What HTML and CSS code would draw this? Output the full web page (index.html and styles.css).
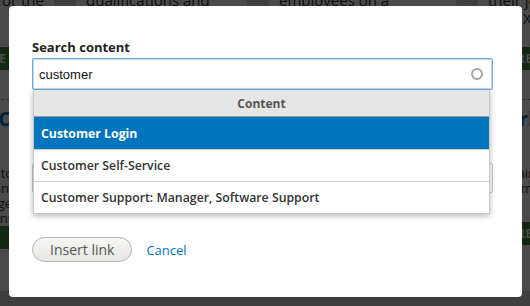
FILE: index.html
```html
<!DOCTYPE html>
<html>
<head>
<meta charset="utf-8">
<link rel="stylesheet" href="styles.css">
</head>
<body>
<div class="page">
  <div class="col">
    <p class="cut">work for the</p>
    <span class="btn-green">READ MORE</span>
    <h3 class="title">Customer Care</h3>
    <p class="para">Help customers<br>find answers<br>and manage their<br>accounts to s</p>
    <span class="btn-green btn-low">APPLY</span>
  </div>
  <div class="col">
    <p class="cut">qualifications and</p>
  </div>
  <div class="col">
    <p class="cut">employees on a</p>
  </div>
  <div class="col">
    <p class="cut">their job</p>
    <span class="close">X</span>
    <span class="btn-green btn-r">MORE</span>
    <h3 class="title">Marketing</h3>
    <p class="para">Reaching<br>customers</p>
    <span class="btn-green btn-low">MORE</span>
  </div>
</div>
<div class="overlay"></div>
<div class="dialog">
  <div class="field">
    <label class="label">Search content</label>
    <div class="search">
      <div class="input">customer<span class="spinner"></span></div>
      <ul class="menu">
        <li class="menu-head">Content</li>
        <li class="menu-item is-active">Customer Login</li>
        <li class="menu-item">Customer Self-Service</li>
        <li class="menu-item">Customer Support: Manager, Software Support</li>
      </ul>
    </div>
  </div>
  <div class="field field-2">
    <div class="box"></div>
  </div>
  <div class="actions">
    <button class="button">Insert link</button>
    <a class="link">Cancel</a>
  </div>
</div>
</body>
</html>
```
FILE: styles.css
```css
html, body {
  margin: 0;
  padding: 0;
}
body {
  width: 530px;
  height: 306px;
  overflow: hidden;
  background: #d4d4d4;
  font-family: "Open Sans", "DejaVu Sans", sans-serif;
}
.page {
  display: grid;
  grid-template-columns: 189px 173px 189px 189px;
  column-gap: 20px;
  margin-left: -134px;
  margin-top: -9px;
  height: 300px;
}
.col {
  background: #fff;
  border-left: 1px dotted #bbb;
  border-right: 1px dotted #bbb;
  padding: 0 10px;
  display: flex;
  flex-direction: column;
  align-items: flex-end;
  color: #333;
  overflow: hidden;
}
.col:nth-child(2), .col:nth-child(3), .col:nth-child(4) {
  align-items: flex-start;
}
.cut {
  margin: 0;
  font-size: 15px;
  line-height: 18px;
  align-self: flex-start;
  white-space: nowrap;
}
.col:first-child .cut {
  align-self: flex-end;
}
.btn-green {
  margin-top: 38px;
  height: 23px;
  width: 120px;
  background: #3c8a3c;
  color: #fff;
  font-size: 13px;
  line-height: 23px;
  font-weight: 700;
  padding-left: 6px;
  box-sizing: border-box;
}
.btn-r {
  margin-top: 20px;
}
.close {
  font-size: 15px;
  line-height: 18px;
  margin-left: 35px;
}
.title {
  margin: 29px 0 0;
  padding-top: 8px;
  border-top: 1px dashed #999;
  align-self: stretch;
  font-size: 20px;
  line-height: 22px;
  color: #0074bd;
  font-weight: 700;
  white-space: nowrap;
}
.col:first-child .title {
  text-align: right;
}
.para {
  margin: 36px 0 0;
  font-size: 13px;
  line-height: 15px;
  align-self: stretch;
  white-space: nowrap;
}
.col:first-child .para {
  text-align: right;
}
.btn-low {
  margin-top: auto;
  margin-bottom: 46px;
}
.overlay {
  position: fixed;
  inset: 0;
  background: rgba(0, 0, 0, 0.71);
}
.dialog {
  position: fixed;
  left: 9px;
  top: 6px;
  width: 513px;
  height: 291px;
  box-sizing: border-box;
  padding: 32px 29px 0 23px;
  background: #fff;
  border-radius: 4px;
}
.label {
  display: block;
  font-size: 13px;
  line-height: 18px;
  font-weight: 700;
  color: #222;
  margin-bottom: 2px;
}
.search {
  position: relative;
}
.input {
  height: 32px;
  box-sizing: border-box;
  border: 1px solid #6fa8e0;
  box-shadow: inset 0 0 0 1px #c3dbf3;
  border-radius: 2px;
  padding: 0 6px;
  display: flex;
  align-items: center;
  font-family: "Liberation Sans", Arial, sans-serif;
  font-size: 13px;
  color: #111;
}
.spinner {
  margin-left: auto;
  margin-right: 3px;
  width: 8px;
  height: 8px;
  border: 2px solid #a3a3a3;
  border-radius: 50%;
}
.menu {
  position: absolute;
  z-index: 2;
  top: 32px;
  left: 1px;
  width: 457px;
  margin: 0;
  padding: 0;
  list-style: none;
  background: #fff;
  border: 1px solid #c8c8c8;
  border-top: 0;
  box-sizing: border-box;
  box-shadow: 0 2px 6px rgba(0, 0, 0, 0.28);
}
.menu-head {
  height: 26px;
  background: #e6e6e6;
  border-bottom: 1px solid #9d9d9d;
  font-size: 12px;
  font-weight: 700;
  color: #555;
  display: flex;
  align-items: center;
  justify-content: center;
}
.menu-item {
  height: 32px;
  display: flex;
  align-items: center;
  padding: 0 7px;
  font-size: 12.3px;
  font-weight: 600;
  color: #333;
}
.menu-item + .menu-item {
  height: 31px;
  border-top: 1px solid #cfcfcf;
}
.menu-item.is-active {
  background: #0074bd;
  color: #fff;
  font-weight: 700;
}
.field-2 {
  margin-top: 73px;
}
.box {
  height: 30px;
  border: 1px solid #c8c8c8;
  box-sizing: border-box;
  border-radius: 2px;
}
.actions {
  margin-top: 44px;
  display: flex;
  align-items: center;
}
.button {
  height: 25px;
  padding: 0 17px;
  border: 1px solid #b3b3b3;
  border-radius: 20px;
  background: linear-gradient(#f6f6f4, #e5e5e2);
  font-family: "Open Sans", sans-serif;
  font-size: 14px;
  color: #555;
  line-height: 23px;
}
.link {
  margin-left: 14px;
  font-size: 13px;
  color: #0074bd;
}
```
